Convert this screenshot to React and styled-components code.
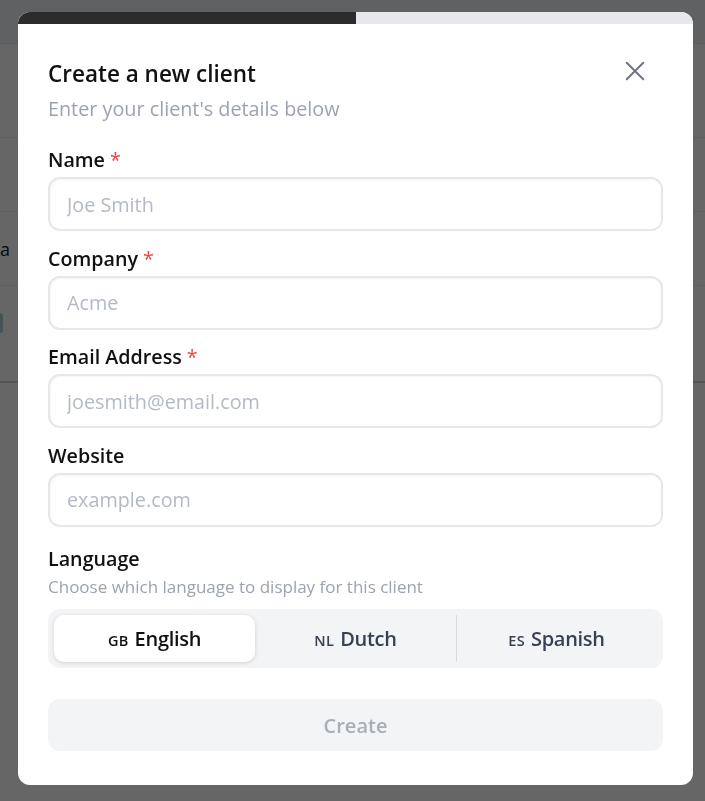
import React from "react";
import styled, { createGlobalStyle } from "styled-components";

const GlobalStyle = createGlobalStyle`
  html, body { margin: 0; padding: 0; }
  body {
    font-family: "Open Sans", "Noto Sans", Arial, sans-serif;
    background: #ffffff;
    color: #111827;
  }
  * { box-sizing: border-box; }
`;

/* ---------- background page ---------- */
const BgPage = styled.div`
  width: 705px;
  height: 801px;
  background: #ffffff;
  display: flex;
  flex-direction: column;
  overflow: hidden;
`;

const BgHeader = styled.div`
  height: 44px;
  flex: none;
  background: #f1f2f4;
  border-bottom: 1px solid #e5e7eb;
`;

const BgRow = styled.div`
  height: ${(p) => p.$h}px;
  flex: none;
  display: flex;
  align-items: center;
  border-bottom: ${(p) => (p.$strong ? "2px solid #d1d5db" : "1px solid #eceef1")};
  font-size: 18px;
  color: #111827;
`;

const BgBadge = styled.span`
  align-self: flex-start;
  margin-top: 27px;
  width: 3px;
  height: 20px;
  background: #a9cfd6;
  border-radius: 0 3px 3px 0;
`;

/* ---------- overlay + modal ---------- */
const Overlay = styled.div`
  position: fixed;
  inset: 0;
  background: rgba(0, 0, 0, 0.6);
  padding: 12px 12px 16px 18px;
  display: flex;
  align-items: flex-start;
`;

const Modal = styled.div`
  width: 675px;
  background: #ffffff;
  border-radius: 12px;
  overflow: hidden;
  display: flex;
  flex-direction: column;
`;

const Progress = styled.div`
  height: 12px;
  background: #e6e8eb;
  display: flex;
`;

const ProgressFill = styled.div`
  height: 100%;
  background: #2c2c2c;
`;

const Body = styled.div`
  padding: 35px 30px 34px 30px;
  display: flex;
  flex-direction: column;
`;

const HeaderRow = styled.div`
  display: flex;
  justify-content: space-between;
  align-items: flex-start;
`;

const Titles = styled.div`
  display: flex;
  flex-direction: column;
  gap: 6px;
`;

const Title = styled.h2`
  margin: 0;
  font-size: 22.5px;
  line-height: 30px;
  font-weight: 600;
  color: #111111;
`;

const Subtitle = styled.p`
  margin: 0;
  font-size: 19.8px;
  line-height: 28px;
  color: #9ca3af;
`;

const CloseButton = styled.button`
  border: none;
  background: none;
  padding: 0;
  margin: 0 16px 0 0;
  width: 24px;
  height: 24px;
  display: flex;
  align-items: center;
  justify-content: center;
  color: #6b7280;
  cursor: pointer;
`;

const Fields = styled.div`
  margin-top: 24px;
  display: flex;
  flex-direction: column;
  gap: 14.5px;
`;

const Field = styled.div`
  display: flex;
  flex-direction: column;
  gap: ${(p) => (p.$gap !== undefined ? p.$gap : 4)}px;
  margin-top: ${(p) => (p.$offset ? p.$offset : 0)}px;
`;

const Label = styled.label`
  font-size: 19.7px;
  line-height: 26px;
  font-weight: 600;
  color: #111111;
`;

const Required = styled.span`
  color: #ef4444;
  margin-left: 5px;
  font-weight: 500;
`;

const Hint = styled.div`
  font-size: 17px;
  line-height: 24px;
  color: #9ca3af;
  margin-top: 3px;
`;

const Input = styled.input`
  width: 100%;
  height: 54px;
  border: 2px solid #e5e7eb;
  border-radius: 12px;
  padding: 0 17px;
  font-family: inherit;
  font-size: 19.8px;
  color: #111827;
  background: #ffffff;
  box-shadow: inset 1px 1px 2px rgba(0, 0, 0, 0.04);
  outline: none;
  &::placeholder { color: #b3bac5; }
`;

const Segmented = styled.div`
  margin-top: 10px;
  height: 59px;
  background: #f3f4f6;
  border-radius: 12px;
  padding: 6px;
  display: grid;
  grid-template-columns: 1fr 1fr 1fr;
  align-items: center;
`;

const Segment = styled.button`
  height: 47px;
  border: none;
  border-radius: 10px;
  background: ${(p) => (p.$active ? "#ffffff" : "transparent")};
  box-shadow: ${(p) => (p.$active ? "0 1px 4px rgba(0,0,0,0.14)" : "none")};
  display: flex;
  align-items: center;
  justify-content: center;
  gap: 6px;
  font-family: inherit;
  color: ${(p) => (p.$active ? "#111111" : "#374151")};
  position: relative;
  cursor: pointer;
  &::before {
    content: "";
    display: ${(p) => (p.$divider ? "block" : "none")};
    position: absolute;
    left: 0;
    top: 0;
    bottom: 0;
    width: 1px;
    background: #d8dbe0;
  }
`;

const Code = styled.span`
  font-size: 14.5px;
  font-weight: 600;
  letter-spacing: 0.3px;
  padding-top: 3px;
`;

const LangName = styled.span`
  font-size: 20px;
  font-weight: 600;
  letter-spacing: -0.3px;
`;

const CreateButton = styled.button`
  margin-top: 31px;
  height: 52px;
  border: none;
  border-radius: 12px;
  background: #f3f4f6;
  color: #a7afb9;
  font-family: inherit;
  font-size: 20px;
  font-weight: 600;
  cursor: not-allowed;
`;

const fields = [
  { label: "Name", placeholder: "Joe Smith", required: true },
  { label: "Company", placeholder: "Acme", required: true },
  { label: "Email Address", placeholder: "joesmith@email.com", required: true },
  { label: "Website", placeholder: "example.com", required: false },
];

const languages = [
  { code: "GB", name: "English" },
  { code: "NL", name: "Dutch" },
  { code: "ES", name: "Spanish" },
];

export default function App() {
  const active = 0;
  return (
    <>
      <GlobalStyle />
      <BgPage>
        <BgHeader />
        <BgRow $h={94} />
        <BgRow $h={74} />
        <BgRow $h={74}>a</BgRow>
        <BgRow $h={97} $strong>
          <BgBadge />
        </BgRow>
      </BgPage>
      <Overlay>
        <Modal role="dialog">
          <Progress>
            <ProgressFill style={{ width: "50%" }} />
          </Progress>
          <Body>
            <HeaderRow>
              <Titles>
                <Title>Create a new client</Title>
                <Subtitle>Enter your client's details below</Subtitle>
              </Titles>
              <CloseButton aria-label="Close">
                <svg width="22" height="22" viewBox="0 0 24 24" fill="none" stroke="currentColor" strokeWidth="2.1" strokeLinecap="round">
                  <path d="M3 3L21 21M21 3L3 21" />
                </svg>
              </CloseButton>
            </HeaderRow>
            <Fields>
              {fields.map((f) => (
                <Field key={f.label}>
                  <Label>
                    {f.label}
                    {f.required && <Required>*</Required>}
                  </Label>
                  <Input placeholder={f.placeholder} />
                </Field>
              ))}
              <Field $gap={0} $offset={5}>
                <Label>Language</Label>
                <Hint>Choose which language to display for this client</Hint>
                <Segmented>
                  {languages.map((l, i) => (
                    <Segment key={l.code} $active={i === active} $divider={i === 2}>
                      <Code>{l.code}</Code>
                      <LangName>{l.name}</LangName>
                    </Segment>
                  ))}
                </Segmented>
              </Field>
            </Fields>
            <CreateButton disabled>Create</CreateButton>
          </Body>
        </Modal>
      </Overlay>
    </>
  );
}
